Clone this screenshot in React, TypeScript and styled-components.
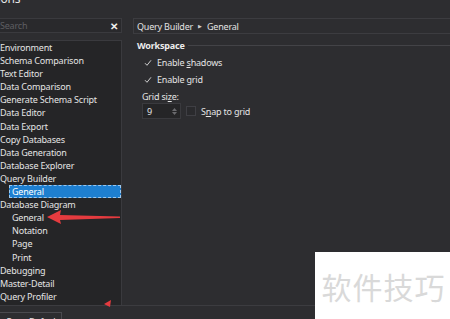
import React from "react";
import styled, { createGlobalStyle } from "styled-components";

const Global = createGlobalStyle`
  html, body { margin: 0; padding: 0; background: #2d2d30; overflow: hidden; }
  body { font-family: "Noto Sans", "Liberation Sans", sans-serif; }
  #root { width: 450px; height: 319px; }
`;

const Window = styled.div`
  position: relative;
  width: 450px;
  height: 319px;
  background: #2d2d30;
  color: #e4e4e4;
  font-size: 9px;
  letter-spacing: -0.2px;
  display: grid;
  grid-template-rows: 18px 288px 13px;
  overflow: hidden;
`;

const TitleBar = styled.div`
  height: 18px;
  overflow: hidden;
`;

const TitleText = styled.div`
  font-size: 12px;
  line-height: 12px;
  margin-top: -7px;
  margin-left: -23px;
  color: #e6e6e6;
`;

const Main = styled.div`
  display: grid;
  grid-template-columns: 122px 1fr;
  column-gap: 11px;
  border-bottom: 1px solid #3c3c40;
`;

const LeftColumn = styled.div`
  display: flex;
  flex-direction: column;
  gap: 7px;
  min-height: 0;
`;

const SearchBox = styled.div`
  height: 15px;
  box-sizing: border-box;
  background: #29292c;
  border: 1px solid #3a3a3e;
  border-left: none;
  display: flex;
  align-items: center;
  justify-content: space-between;
  padding: 0 3px 0 0;
`;

const Placeholder = styled.span`
  color: #5e5e62;
`;

const ClearIcon = styled.span`
  color: #f0f0f0;
  font-weight: bold;
  font-size: 10px;
  line-height: 10px;
`;

const Tree = styled.div`
  flex: 1;
  box-sizing: border-box;
  background: #252527;
  border: 1px solid #3a3a3e;
  border-left: none;
  border-bottom: none;
  display: flex;
  flex-direction: column;
`;

const TreeItem = styled.div<{ $level: number; $selected?: boolean }>`
  height: 13.1px;
  line-height: 13px;
  box-sizing: border-box;
  white-space: nowrap;
  padding-left: ${(p) => (p.$level === 0 ? 0 : 12)}px;
  margin-left: ${(p) => (p.$selected ? 9 : 0)}px;
  ${(p) =>
    p.$selected
      ? `background: #1e7fd0; outline: 1px dashed #9cc8ee; outline-offset: -1px; padding-left: 3px; color: #ffffff;`
      : ""}
`;

const RightColumn = styled.div`
  display: flex;
  flex-direction: column;
  min-width: 0;
`;

const Breadcrumb = styled.div`
  height: 16px;
  box-sizing: border-box;
  border: 1px solid #3c3c40;
  border-right: none;
  display: flex;
  align-items: center;
  gap: 5px;
  padding-left: 3px;
  color: #e2e2e2;
`;

const Caret = styled.span`
  font-size: 5px;
  color: #cfcfcf;
`;

const Content = styled.div`
  padding: 5px 0 0 4px;
  display: flex;
  flex-direction: column;
`;

const GroupHeader = styled.div`
  display: flex;
  align-items: center;
  gap: 3px;
  height: 13px;
`;

const GroupTitle = styled.span`
  font-weight: bold;
  color: #ececec;
  font-size: 9px;
`;

const GroupLine = styled.div`
  flex: 1;
  height: 1px;
  background: #434347;
`;

const CheckRow = styled.div<{ $first?: boolean }>`
  display: flex;
  align-items: center;
  gap: 4px;
  height: 17px;
  padding-left: 6px;
  margin-top: ${(p) => (p.$first ? 2 : 0)}px;
`;

const CheckBox = styled.span<{ $checked?: boolean }>`
  width: 10px;
  height: 10px;
  box-sizing: border-box;
  border: 1px solid ${(p) => (p.$checked ? "transparent" : "#3f3f44")};
  background: ${(p) => (p.$checked ? "transparent" : "#2a2a2d")};
  display: inline-flex;
  align-items: center;
  justify-content: center;
`;

const Label = styled.span``;

const U = styled.span`
  text-decoration: underline;
  text-underline-offset: 1px;
`;

const FieldLabel = styled.div`
  margin-top: 3px;
  padding-left: 5px;
  height: 12px;
  line-height: 12px;
`;

const FieldRow = styled.div`
  display: flex;
  align-items: center;
  gap: 5px;
  padding-left: 5px;
`;

const SpinBox = styled.div`
  width: 39px;
  height: 16px;
  box-sizing: border-box;
  border: 1px solid #3a3a3e;
  background: #252527;
  display: flex;
  align-items: center;
  justify-content: space-between;
  padding: 0 3px 0 4px;
`;

const SpinArrows = styled.div`
  display: flex;
  flex-direction: column;
  gap: 1px;
`;

const Footer = styled.div`
  display: flex;
  align-items: flex-start;
  overflow: hidden;
`;

const FooterButton = styled.div`
  margin-top: 6px;
  width: 62px;
  height: 16px;
  box-sizing: border-box;
  border: 1px solid #4a4a4f;
  border-left: none;
  white-space: nowrap;
  overflow: hidden;
  line-height: 17px;
  color: #e2e2e2;
  text-indent: -18px;
`;

const Overlay = styled.svg`
  position: absolute;
  left: 0;
  top: 0;
  pointer-events: none;
`;

const Watermark = styled.div`
  position: absolute;
  left: 315px;
  top: 252px;
  width: 135px;
  height: 67px;
  background: #ffffff;
  display: flex;
  align-items: center;
  justify-content: center;
  font-family: "Noto Sans CJK SC", sans-serif;
  font-size: 30px;
  color: #d9d9d9;
  letter-spacing: 1px;
  padding-left: 2px;
  box-sizing: border-box;
`;

const Check = () => (
  <svg width="8" height="8" viewBox="0 0 8 8">
    <path d="M1 4.2 L3 6.3 L7 1.3" fill="none" stroke="#cfcfcf" strokeWidth="1" />
  </svg>
);

const tree: { label: string; level: number; selected?: boolean }[] = [
  { label: "Environment", level: 0 },
  { label: "Schema Comparison", level: 0 },
  { label: "Text Editor", level: 0 },
  { label: "Data Comparison", level: 0 },
  { label: "Generate Schema Script", level: 0 },
  { label: "Data Editor", level: 0 },
  { label: "Data Export", level: 0 },
  { label: "Copy Databases", level: 0 },
  { label: "Data Generation", level: 0 },
  { label: "Database Explorer", level: 0 },
  { label: "Query Builder", level: 0 },
  { label: "General", level: 1, selected: true },
  { label: "Database Diagram", level: 0 },
  { label: "General", level: 1 },
  { label: "Notation", level: 1 },
  { label: "Page", level: 1 },
  { label: "Print", level: 1 },
  { label: "Debugging", level: 0 },
  { label: "Master-Detail", level: 0 },
  { label: "Query Profiler", level: 0 },
];

export default function App() {
  return (
    <>
      <Global />
      <Window>
        <TitleBar>
          <TitleText>Options</TitleText>
        </TitleBar>
        <Main>
          <LeftColumn>
            <SearchBox>
              <Placeholder>Search</Placeholder>
              <ClearIcon>✕</ClearIcon>
            </SearchBox>
            <Tree>
              {tree.map((t, i) => (
                <TreeItem key={i} $level={t.level} $selected={t.selected}>
                  {t.label}
                </TreeItem>
              ))}
            </Tree>
          </LeftColumn>
          <RightColumn>
            <Breadcrumb>
              <span>Query Builder</span>
              <Caret>▶</Caret>
              <span>General</span>
            </Breadcrumb>
            <Content>
              <GroupHeader>
                <GroupTitle>Workspace</GroupTitle>
                <GroupLine />
              </GroupHeader>
              <CheckRow $first>
                <CheckBox $checked>
                  <Check />
                </CheckBox>
                <Label>
                  Enable <U>s</U>hadows
                </Label>
              </CheckRow>
              <CheckRow>
                <CheckBox $checked>
                  <Check />
                </CheckBox>
                <Label>
                  Enable <U>g</U>rid
                </Label>
              </CheckRow>
              <FieldLabel>
                Grid si<U>z</U>e:
              </FieldLabel>
              <FieldRow>
                <SpinBox>
                  <span>9</span>
                  <SpinArrows>
                    <svg width="5" height="3" viewBox="0 0 5 3">
                      <path d="M0 3 L2.5 0 L5 3Z" fill="#6a6a6e" />
                    </svg>
                    <svg width="5" height="3" viewBox="0 0 5 3">
                      <path d="M0 0 L2.5 3 L5 0Z" fill="#6a6a6e" />
                    </svg>
                  </SpinArrows>
                </SpinBox>
                <CheckBox />
                <Label>
                  S<U>n</U>ap to grid
                </Label>
              </FieldRow>
            </Content>
          </RightColumn>
        </Main>
        <Footer>
          <FooterButton>Reset Page Defaults</FooterButton>
        </Footer>
        <Overlay width="450" height="319" viewBox="0 0 450 319">
          <path d="M47 217 L61 210 L60 215 L120 216.5 L120 218 L60 220 L61 224 Z" fill="#e53b3f" />
          <path d="M104 304 L111 300 L110 307 Z" fill="#e53b3f" />
        </Overlay>
        <Watermark>软件技巧</Watermark>
      </Window>
    </>
  );
}
